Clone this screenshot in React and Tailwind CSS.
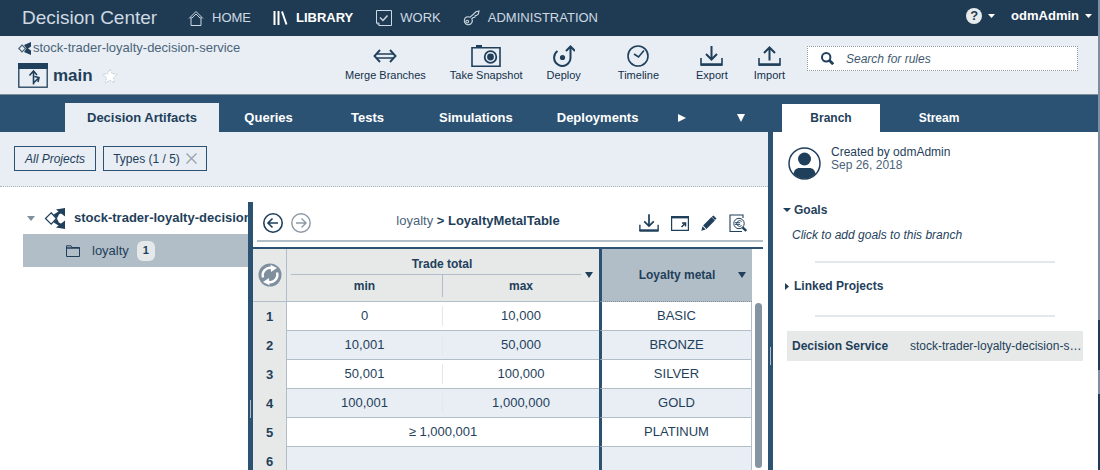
import React from "react";

const rows = [
  { min: "0", max: "10,000", metal: "BASIC" },
  { min: "10,001", max: "50,000", metal: "BRONZE" },
  { min: "50,001", max: "100,000", metal: "SILVER" },
  { min: "100,001", max: "1,000,000", metal: "GOLD" },
  { span: "≥ 1,000,001", metal: "PLATINUM" },
  { min: "", max: "", metal: "" },
];

function Svg({ className, box = "0 0 24 24", children, sw = 2 }) {
  return (
    <svg className={className} viewBox={box} fill="none" stroke="currentColor" strokeWidth={sw} aria-hidden="true">
      {children}
    </svg>
  );
}

const HomeIcon = () => (
  <Svg className="h-[17px] w-[16px]" box="0 0 16 17" sw={1}>
    <path d="M1 8.5L8 1.5l7 7M3 7v8.5h10V7M3.5 8.5L8 4l4.5 4.5" />
  </Svg>
);

const LibraryIcon = () => (
  <Svg className="h-[14px] w-[15px]" box="0 0 15 14" sw={2}>
    <path d="M1.5 0v14M5.5 0v14M9 .5L13.500 13.5" />
  </Svg>
);

const WorkIcon = () => (
  <Svg className="h-[16px] w-[17px]" box="0 0 17 16" sw={1}>
    <path d="M1.500 .5h15v15H4l-2.500-2.500zM1.500 13H4v2.500" />
    <path d="M5 7.500l3 3 4.500-5" strokeWidth="1.500" />
  </Svg>
);

const KeyIcon = () => (
  <Svg className="h-[16px] w-[17px]" box="0 0 17 16" sw={1.1}>
    <path d="M7.200 7.200L13 1.800l3-.8-.6 3-1.700 1.300-1.500.3-.4 1.700-1.700.2-1.300 1.300a4 4 0 1 1-1.600-1.600z" />
    <circle cx="4.200" cy="11.600" r="1.400" />
  </Svg>
);

const Decision = ({ className }) => (
  <Svg className={className} box="0 0 22 22" sw={1.3}>
    <path d="M7 5l5.500 6L7 17 1 11z" />
    <path d="M10.500 8L17 4M10.500 14l6.500 4" strokeWidth="3" />
    <path d="M12 1.500L21.500 0v9zM12 20.500l9.500 1.500v-9z" fill="currentColor" stroke="none" />
    <path d="M10 7h5l-2 4 2 4h-5l3-4z" fill="currentColor" stroke="none" />
  </Svg>
);

const DecisionSmall = () => (
  <Svg className="h-[13px] w-[15px] shrink-0 text-[#1f3f5b]" box="0 0 15 13" sw={1.2}>
    <path d="M4 3l3.500 3.500L4 10 .8 6.500z" className="text-[#4b6479]" />
    <path d="M6 3L13 0v4.500L10 6.500l3 2V13L6 10l2.500-3.500z" fill="currentColor" stroke="none" />
  </Svg>
);

const BranchWindow = () => (
  <Svg className="h-[25px] w-[30px]" box="0 0 30 25" sw={1.3}>
    <rect x=".8" y=".8" width="28.400" height="23.400" />
    <rect x="0" y="0" width="30" height="6" fill="currentColor" stroke="none" />
    <path d="M15.500 21.500V8.500M11.500 12.500l4-4.500 3.500 4M15.500 20l5-5M16.500 13.500l4.500 1-1 4.500" strokeWidth="1.600" />
  </Svg>
);

const MergeIcon = () => (
  <Svg className="h-[14px] w-6" box="0 0 24 14" sw={1.9}>
    <path d="M7 1L1.500 7 7 13M17 1l5.500 6L17 13" />
    <path d="M3.500 5h17M3.500 9h17" strokeWidth="1.300" />
  </Svg>
);

const CameraIcon = () => (
  <Svg className="h-[22px] w-[30px]" box="0 0 30 22" sw={1.6}>
    <path d="M1 2.800h28v18.400H1z" />
    <path d="M5 0h6v3H5z" fill="currentColor" stroke="none" />
    <circle cx="19.500" cy="12" r="5.800" strokeWidth="1.800" />
    <circle cx="19.500" cy="12" r="3.400" fill="currentColor" stroke="none" />
  </Svg>
);

const DeployIcon = () => (
  <Svg className="h-[22px] w-[22px]" box="0 0 22 22" sw={2}>
    <path d="M4.500 6A8.200 8.200 0 1 0 17.500 13V2M13 6l4.500-4.500L22 6" />
    <circle cx="9.500" cy="12.500" r="2.600" fill="currentColor" stroke="none" />
  </Svg>
);

const ClockIcon = () => (
  <Svg className="h-[22px] w-[22px]" box="0 0 22 22" sw={1.6}>
    <circle cx="11" cy="11" r="10" />
    <path d="M7 9l4.500 3L17 5.500" />
  </Svg>
);

const ExportIcon = ({ className = "h-5 w-[23px]" }) => (
  <Svg className={className} box="0 0 23 20" sw={2}>
    <path d="M11.500 0v13M6 8l5.500 5.500L17 8" />
    <path d="M1 12v7h21v-7" strokeWidth="1.600" />
    <path d="M1 18.500h21" strokeWidth="2.500" />
  </Svg>
);

const ImportIcon = () => (
  <Svg className="h-5 w-[23px]" box="0 0 23 20" sw={2}>
    <path d="M11.500 14.500V2M6 7l5.500-5.500L17 7" />
    <path d="M1 12v7h21v-7" strokeWidth="1.600" />
    <path d="M1 18.500h21" strokeWidth="2.500" />
  </Svg>
);

const Caret = ({ className, dir = "down" }) => (
  <svg className={className} viewBox="0 0 8 8" fill="currentColor" preserveAspectRatio="none" aria-hidden="true">
    <path d={dir === "down" ? "M0 0h8L4 8z" : "M0 0l8 4-8 4z"} />
  </svg>
);

function Tool({ icon, label }) {
  return (
    <button type="button" className="flex flex-col items-center text-[11px] leading-4 whitespace-nowrap text-[#14304a]">
      <span className="flex h-[22px] items-center justify-center text-[#1f3f5b]">{icon}</span>
      {label}
    </button>
  );
}

function Nav({ icon, label, active }) {
  return (
    <a href="#" className={active ? "flex items-center gap-2 font-bold text-white" : "flex items-center gap-2 text-[#ced9e2]"}>
      {icon}
      {label}
    </a>
  );
}

function Header() {
  return (
    <header className="flex h-9 shrink-0 items-center justify-between bg-[#1f3b53] pr-1.5 pl-[22px] text-[13px]">
      <div className="flex items-center">
        <h1 className="w-[166px] text-[19px] whitespace-nowrap text-[#ced9e2]">Decision Center</h1>
        <nav className="flex items-center gap-[22px]">
          <Nav icon={<HomeIcon />} label="HOME" />
          <Nav icon={<LibraryIcon />} label="LIBRARY" active />
          <Nav icon={<WorkIcon />} label="WORK" />
          <Nav icon={<KeyIcon />} label="ADMINISTRATION" />
        </nav>
      </div>
      <div className="flex items-center gap-4 pb-1 font-bold text-white">
        <button type="button" aria-label="Help" className="flex items-center gap-1.5">
          <span className="flex size-4 items-center justify-center rounded-full bg-[#e6ebee] text-[13px] leading-4 text-[#1f3b53]">?</span>
          <Caret className="h-1 w-[7px]" />
        </button>
        <button type="button" className="flex items-center gap-1.5">
          odmAdmin
          <Caret className="h-1 w-[7px]" />
        </button>
      </div>
    </header>
  );
}

function Toolbar() {
  return (
    <div className="flex h-[59px] shrink-0 items-start border-b border-[#7d8d99] bg-[#e8eef4] pr-5 pl-[18px]">
      <div className="flex min-w-0 flex-1 flex-col gap-[7px] pt-1">
        <a href="#" className="flex items-center text-[13px] leading-4 text-[#4b6479]">
          <DecisionSmall />
          stock-trader-loyalty-decision-service
        </a>
        <div className="flex items-center gap-[5px]">
          <BranchWindow />
          <h2 className="text-[17px] leading-6 font-bold">main</h2>
          <button type="button" aria-label="Add to favourites" className="ml-1">
            <svg className="size-4" viewBox="0 0 16 16" fill="#fff" stroke="#b9c4cc" strokeWidth=".8" strokeDasharray="2 1" aria-hidden="true">
              <path d="M8 1l2.200 4.700 5 .6-3.700 3.500 1 5L8 12.300 3.500 14.800l1-5L.8 6.300l5-.6z" />
            </svg>
          </button>
        </div>
      </div>
      <div className="flex items-start gap-[37px] pt-[9px]">
        <div className="flex gap-6">
          <Tool icon={<MergeIcon />} label="Merge Branches" />
          <Tool icon={<CameraIcon />} label="Take Snapshot" />
          <Tool icon={<DeployIcon />} label="Deploy" />
        </div>
        <Tool icon={<ClockIcon />} label="Timeline" />
        <div className="flex gap-[26px]">
          <Tool icon={<ExportIcon />} label="Export" />
          <Tool icon={<ImportIcon />} label="Import" />
        </div>
      </div>
      <label className="mt-2.5 ml-[22px] flex h-[25px] w-[271px] items-center gap-3 border border-dotted border-[#8f9ca6] bg-white pl-[13px]">
        <Svg className="size-[13px] shrink-0" box="0 0 13 13" sw={2}>
          <circle cx="5.200" cy="5.200" r="4.200" />
          <path d="M8 8l4.200 4.200" strokeWidth="2.800" />
        </Svg>
        <input
          type="text"
          aria-label="Search for rules"
          placeholder="Search for rules"
          className="min-w-0 flex-1 text-[12px] italic outline-none placeholder:text-[#3f5a70]"
        />
      </label>
    </div>
  );
}

const tabClass = "flex h-[29px] min-w-[99px] items-center justify-center px-[22px]";

function MainTabs() {
  return (
    <div className="flex h-[37px] shrink-0 items-end bg-[#2b5273] pl-[65px] text-[13px] font-bold text-white">
      <button type="button" className="flex h-[29px] items-center justify-center bg-[#e8eef4] px-[22px] text-[#1f3f5b]">
        Decision Artifacts
      </button>
      <button type="button" className={tabClass}>Queries</button>
      <button type="button" className={tabClass}>Tests</button>
      <button type="button" className={tabClass}>Simulations</button>
      <button type="button" className={tabClass}>Deployments</button>
      <button type="button" aria-label="Next tabs" className="flex h-[29px] items-center pr-5 pl-[18px]">
        <Caret dir="right" className="size-2" />
      </button>
      <button type="button" aria-label="All tabs" className="mr-[23px] ml-auto flex h-[29px] items-center">
        <Caret className="size-2" />
      </button>
    </div>
  );
}

function Filters() {
  return (
    <div className="flex h-[55px] shrink-0 items-start gap-[7px] border-b border-dotted border-[#aab6bf] bg-[#e8eef4] pt-3.5 pl-3.5 text-[12px]">
      <button type="button" className="flex h-[25px] w-[82px] items-center justify-center border border-[#2b5273] italic">
        All Projects
      </button>
      <button type="button" className="flex h-[25px] w-[104px] items-center justify-center gap-1.5 border border-[#2b5273] whitespace-nowrap">
        Types (1 / 5)
        <Svg className="size-[11px] text-[#98a3ac]" box="0 0 11 11" sw={1.4}>
          <path d="M.5.5l10 10M10.500.5l-10 10" />
        </Svg>
      </button>
    </div>
  );
}

function Tree() {
  return (
    <div className="w-[248px] shrink-0 overflow-hidden pt-[15px] pl-[23px] text-[13px]">
      <div className="flex h-8 items-center pl-1 font-bold whitespace-nowrap">
        <Caret className="h-[5px] w-2 shrink-0 text-[#7f8f9c]" />
        <Decision className="mr-2 ml-[9px] h-[21px] w-[22px] shrink-0" />
        stock-trader-loyalty-decision-service
      </div>
      <div className="flex h-[33px] items-center bg-[#b2bec7] pl-[43px]">
        <Svg className="h-3 w-[14px]" box="0 0 14 12" sw={1}>
          <path d="M.5 11.500V.8h4.500l1 1.700h7.500v9z" />
          <path d="M.5 3h13" strokeWidth="1.500" />
        </Svg>
        <span className="ml-3">loyalty</span>
        <span className="ml-2 flex h-5 w-[18px] items-center justify-center rounded-md bg-[#e6e9ea] text-[11px] font-bold">1</span>
      </div>
    </div>
  );
}

function ArtifactHeader() {
  return (
    <div className="mr-[5px] ml-1 flex h-10 items-center border-b-2 border-[#b2bec7] pt-1 pr-4 pl-1.5">
      <div className="flex gap-2">
        <button type="button" aria-label="Back">
          <Svg className="size-5" box="0 0 20 20" sw={1.6}>
            <circle cx="10" cy="10" r="9.200" />
            <path d="M15 10H5.500M9.500 5.500L5 10l4.500 4.500" />
          </Svg>
        </button>
        <button type="button" aria-label="Forward" className="text-[#8c9aa6]">
          <Svg className="size-5" box="0 0 20 20" sw={1.4}>
            <circle cx="10" cy="10" r="9.200" />
            <path d="M5 10h9.500M10.500 5.500L15 10l-4.500 4.500" />
          </Svg>
        </button>
      </div>
      <div className="flex-1 pb-1 pl-1.5 text-center text-[13px] font-bold whitespace-nowrap">
        <a href="#" className="font-normal text-[#4b6479]">loyalty</a> &gt; LoyaltyMetalTable
      </div>
      <div className="flex items-center gap-3">
        <button type="button" aria-label="Export table"><ExportIcon className="h-[18px] w-5" /></button>
        <button type="button" aria-label="Open in window">
          <Svg className="h-[15px] w-[18px]" box="0 0 18 15" sw={1.2}>
            <path d="M.6.6h16.800v13.800H.6z" />
            <path d="M0 1.200h18" strokeWidth="2.400" />
            <path d="M10.500 11l3.500-3.500M11 7h3.500v3.500" strokeWidth="1.500" />
          </Svg>
        </button>
        <button type="button" aria-label="Edit">
          <svg className="size-4" viewBox="0 0 16 16" fill="currentColor" aria-hidden="true">
            <path d="M12.500.5l3 3L14 5l-3.200-3.200zM10.500 2.100l3.400 3.400-8.400 8.400-3.400-3.400zM1.500 11.300l3.200 3.200L.3 15.700z" />
          </svg>
        </button>
        <button type="button" aria-label="Preview">
          <Svg className="h-[19px] w-[18px]" box="0 0 18 19" sw={1.1}>
            <path d="M14 4V1H1v16.500h12" />
            <circle cx="10" cy="9.500" r="5.200" strokeWidth="1" />
            <path d="M12.700 7.400a2.900 2.900 0 1 0 0 4.200M6 8.700h5.200M6 10.400h5.200" strokeWidth=".9" />
            <path d="M13.500 13.300l3.800 3.700" strokeWidth="2.400" />
          </Svg>
        </button>
      </div>
    </div>
  );
}

function DecisionTable() {
  return (
    <div className="mt-[5px] mr-[5px] flex border-t-2 border-[#2b5273]">
      <table className="h-full w-full flex-1 table-fixed border-separate border-spacing-0 text-center text-[13px]">
        <colgroup>
          <col className="w-[34px]" />
          <col />
          <col />
          <col className="w-[153px]" />
        </colgroup>
        <thead className="text-[12px]">
          <tr className="h-[26px]">
            <th rowSpan={2} className="border-r border-b border-[#b2bec7] bg-[#e6e9e8] p-0">
              <button type="button" aria-label="Refresh" className="flex w-full justify-center">
                <svg className="size-6" viewBox="0 0 24 24" fill="none" aria-hidden="true">
                  <circle cx="12" cy="12" r="11.500" fill="#7f8f9e" />
                  <path d="M5 14.500a7.500 7.500 0 0 1 9-9.500M19 9.500a7.500 7.500 0 0 1-9 9.500" stroke="#fff" strokeWidth="2.400" />
                  <path d="M12.500 1.800l6.500 3.200-6 4zM11.500 22.200l-6.500-3.200 6-4z" fill="#fff" />
                </svg>
              </button>
            </th>
            <th colSpan={2} className="bg-[#e6e9e8] p-0">
              <div className="relative mr-[18px] ml-1 flex h-[26px] items-center justify-center border-b border-[#b2bec7] pt-1 pl-3">
                Trade total
                <button type="button" aria-label="Trade total menu" className="absolute -right-3 -bottom-1">
                  <Caret className="h-1.5 w-2" />
                </button>
              </div>
            </th>
            <th rowSpan={2} className="border-b border-l-3 border-dotted border-b-[#7f8f9c] border-l-[#2b5273] bg-[#b2bec7] p-0 [border-left-style:solid]">
              <div className="relative flex items-center justify-center">
                Loyalty metal
                <button type="button" aria-label="Loyalty metal menu" className="absolute top-1.5 right-1.5">
                  <Caret className="h-1.5 w-2" />
                </button>
              </div>
            </th>
          </tr>
          <tr className="h-[27px]">
            <th className="border-b border-[#b2bec7] bg-[#e6e9e8] p-0">
              <div className="mb-1 flex h-[22px] items-center justify-center border-r border-[#b2bec7]">min</div>
            </th>
            <th className="border-b border-[#b2bec7] bg-[#e6e9e8] p-0">
              <div className="mb-1 flex h-[22px] items-center justify-center">max</div>
            </th>
          </tr>
        </thead>
        <tbody>
          {rows.map((r, i) => {
            const bg = i % 2 ? "bg-[#e8eef4]" : "bg-white";
            const last = i === rows.length - 1;
            return (
              <tr key={i} className="h-[29px]">
                <th className="border-r border-[#b2bec7] bg-[#e6e9e8] p-0">{i + 1}</th>
                {r.span || last ? (
                  <td colSpan={2} className={`${bg} border-b border-[#b2bec7] p-0`}>{r.span}</td>
                ) : (
                  <>
                    <td className={`${bg} border-b border-[#b2bec7] p-0`}>
                      <div className="border-r border-[#e3e8ec]">{r.min}</div>
                    </td>
                    <td className={`${bg} border-b border-[#b2bec7] p-0`}>{r.max}</td>
                  </>
                )}
                <td className={`${bg} border-r border-b border-l-3 border-[#b2bec7] border-l-[#2b5273] p-0`}>{r.metal}</td>
              </tr>
            );
          })}
        </tbody>
      </table>
      <div className="w-[11px] shrink-0 pt-[54px] pl-[3px]">
        <div className="h-[165px] w-[7px] rounded-full bg-[#8494a2]" />
      </div>
    </div>
  );
}

function Grip() {
  return <span className="h-[18px] w-px bg-[#b2bec7]" />;
}

function SidePanel() {
  return (
    <aside className="flex w-[325px] shrink-0 flex-col text-[12px]">
      <div className="flex h-[37px] items-end bg-[#2b5273] pl-[9px] font-bold text-white">
        <button type="button" className="h-7 w-[98px] bg-white text-[#1f3f5b]">Branch</button>
        <button type="button" className="h-7 w-[118px]">Stream</button>
      </div>
      <div className="flex items-center gap-[10px] pt-3.5 pl-[15px]">
        <svg className="size-[33px]" viewBox="0 0 33 33" aria-hidden="true">
          <circle cx="16.500" cy="16.500" r="15.500" fill="#fff" stroke="#1f3f5b" strokeWidth="1.500" />
          <circle cx="16.500" cy="12" r="6.500" fill="#1f3f5b" />
          <path d="M5.500 27c.5-4 3-6 6-6h10c3 0 5.500 2 6 6a15.500 15.500 0 0 1-22 0z" fill="#1f3f5b" />
        </svg>
        <div className="pb-2 leading-[13px]">
          <p>Created by odmAdmin</p>
          <p className="text-[#4b6479]">Sep 26, 2018</p>
        </div>
      </div>
      <button type="button" className="mt-[22px] flex h-4 items-center gap-[3px] pl-2.5 font-bold">
        <Caret className="h-1 w-2" />
        Goals
      </button>
      <button type="button" className="mt-[9px] h-4 pl-[19px] text-left leading-4 italic">Click to add goals to this branch</button>
      <hr className="mt-[18px] mr-[43px] ml-[42px] border-t-2 border-[#e3e7e9]" />
      <button type="button" className="mt-[15px] flex h-4 items-center gap-[5px] pl-3 font-bold">
        <Caret dir="right" className="h-[7px] w-1" />
        Linked Projects
      </button>
      <hr className="mt-[21px] mr-[43px] ml-[42px] border-t-2 border-[#e3e7e9]" />
      <dl className="mt-3.5 mr-[15px] ml-3.5 flex h-[30px] items-center bg-[#e6e9e8] pl-[5px]">
        <dt className="w-[118px] shrink-0 font-bold">Decision Service</dt>
        <dd>stock-trader-loyalty-decision-s…</dd>
      </dl>
    </aside>
  );
}

export default function App() {
  return (
    <div className="flex h-screen overflow-hidden bg-white font-['Liberation_Sans',Arial,sans-serif] text-[#1f3f5b]">
      <div className="flex min-w-0 flex-1 flex-col">
        <Header />
        <Toolbar />
        <div className="flex min-h-0 flex-1">
          <main className="flex min-w-0 flex-1 flex-col">
            <MainTabs />
            <Filters />
            <div className="flex min-h-0 flex-1">
              <Tree />
              <div className="mt-[15px] flex w-[5px] shrink-0 justify-center bg-[#2b5273] pt-[198px]">
                <Grip />
              </div>
              <section className="min-w-0 flex-1 overflow-hidden pt-[15px]">
                <ArtifactHeader />
                <DecisionTable />
              </section>
            </div>
          </main>
          <div className="flex w-[5px] shrink-0 justify-center bg-[#2b5273] pt-[252px]">
            <Grip />
          </div>
          <SidePanel />
        </div>
      </div>
      <div className="flex w-0.5 shrink-0 flex-col bg-[#7f8fa3] pt-80">
        <div className="h-[50px] bg-[#1f3b53]" />
        <div className="mt-6 flex-1 bg-[#1f3b53]" />
      </div>
    </div>
  );
}
